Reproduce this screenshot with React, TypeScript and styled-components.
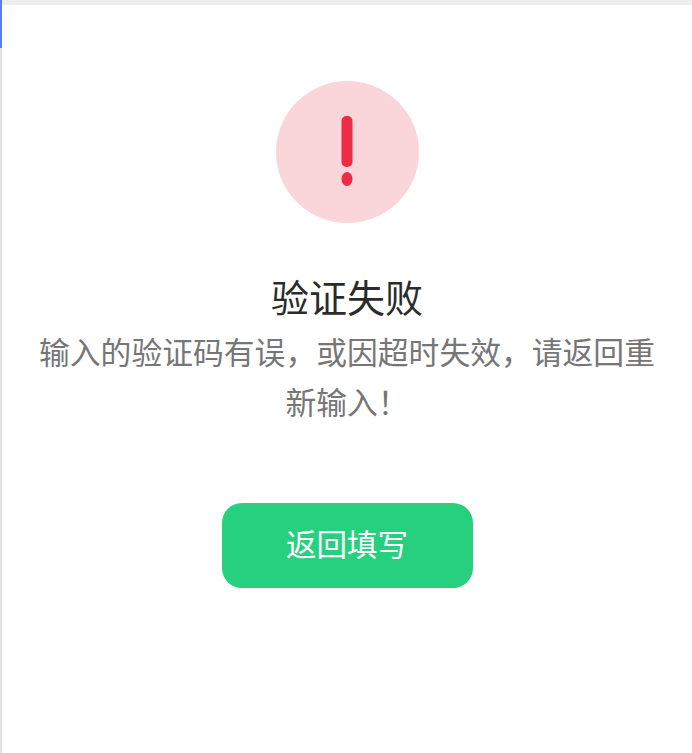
import React from 'react';
import styled, { createGlobalStyle } from 'styled-components';

const GlobalStyle = createGlobalStyle`
  html, body {
    margin: 0;
    padding: 0;
    background: #fff;
  }
  body {
    font-family: "Noto Sans CJK SC", "Liberation Sans", sans-serif;
  }
`;

const Page = styled.div`
  width: 692px;
  height: 753px;
  display: flex;
  overflow: hidden;
`;

const Rail = styled.div`
  width: 2px;
  flex: none;
  display: flex;
  flex-direction: column;
  background: #e2e2e2;
`;

const RailThumb = styled.div`
  height: 48px;
  background: #5b7cf7;
`;

const Column = styled.div`
  flex: 1;
  display: flex;
  flex-direction: column;
`;

const TopBar = styled.div`
  height: 5px;
  flex: none;
  background: #eeeeee;
`;

const Content = styled.main`
  flex: 1;
  display: flex;
  flex-direction: column;
  align-items: center;
  padding: 76px 32px 0;
`;

const Badge = styled.div`
  width: 143px;
  height: 142px;
  border-radius: 50%;
  background: #fad6db;
  display: flex;
  align-items: center;
  justify-content: center;
`;

const Title = styled.h1`
  margin: 48px 0 0;
  font-size: 38px;
  line-height: 50px;
  font-weight: 400;
  color: #2b2b2b;
  text-align: center;
`;

const Message = styled.p`
  margin: 5px 0 0;
  width: 620px;
  font-size: 30.8px;
  line-height: 50px;
  color: #767676;
  text-align: center;
`;

const BackButton = styled.button`
  margin-top: 77px;
  width: 251px;
  height: 85px;
  padding: 0 0 5px;
  border: 0;
  border-radius: 20px;
  background: #26d07f;
  color: #fff;
  font-family: inherit;
  font-size: 30.5px;
  cursor: pointer;
`;

const App: React.FC = () => {
  return (
    <Page>
      <GlobalStyle />
      <Rail>
        <RailThumb />
      </Rail>
      <Column>
        <TopBar />
        <Content>
          <Badge>
            <svg width="12" height="72" viewBox="0 0 12 72">
              <rect x="0.5" y="0" width="11" height="51" rx="5" fill="#ec2b45" />
              <ellipse cx="6" cy="63" rx="5.5" ry="7" fill="#ec2b45" />
            </svg>
          </Badge>
          <Title>验证失败</Title>
          <Message>输入的验证码有误，或因超时失效，请返回重新输入！</Message>
          <BackButton>返回填写</BackButton>
        </Content>
      </Column>
    </Page>
  );
};

export default App;
